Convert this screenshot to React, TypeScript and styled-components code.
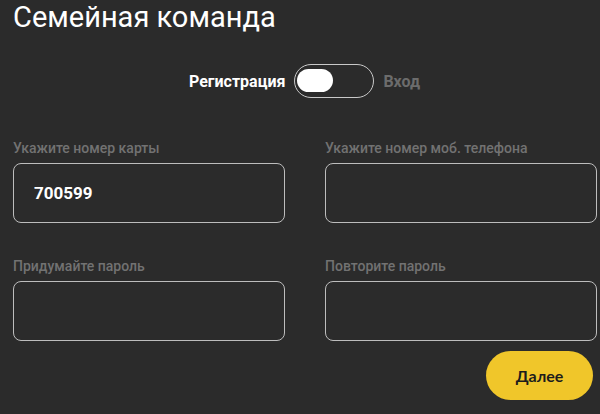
import React, { useState } from 'react'
import styled, { createGlobalStyle } from 'styled-components'

//styling:
const GlobalStyle = createGlobalStyle`
  html, body {
    margin: 0;
    padding: 0;
    background-color: #2b2b2b;
    font-family: Roboto, "Liberation Sans", sans-serif;
  }
`
const Page = styled.div`
  width: 600px;
  height: 414px;
  box-sizing: border-box;
  padding: 0 4px 0 13px;
  background-color: #2b2b2b;
  overflow: hidden;
`
const Title = styled.h1`
  margin: 0;
  padding-top: 0;
  font-size: 29px;
  line-height: 35px;
  font-weight: 400;
  color: #ffffff;
`
const ModeRow = styled.div`
  display: flex;
  justify-content: center;
  align-items: center;
  gap: 9px;
  margin-top: 29px;
`
const ModeText = styled.span<{ $active?: boolean }>`
  font-size: 16px;
  font-weight: 700;
  color: ${p => (p.$active ? '#ffffff' : '#6c6c6c')};
`
const Switch = styled.button<{ $on: boolean }>`
  position: relative;
  width: 80px;
  height: 34px;
  padding: 0;
  border: 1.5px solid #c9c9c9;
  border-radius: 17px;
  background: transparent;
  cursor: pointer;
`
const Knob = styled.span<{ $on: boolean }>`
  position: absolute;
  top: 4px;
  left: ${p => (p.$on ? '2px' : '40px')};
  width: 36px;
  height: 23px;
  border-radius: 12px;
  background-color: #ffffff;
  transition: 300ms;
`
const FormGrid = styled.div`
  display: grid;
  grid-template-columns: 272px 272px;
  column-gap: 40px;
  row-gap: 35px;
  margin-top: 42px;
`
const Field = styled.label`
  display: flex;
  flex-direction: column;
`
const FieldLabel = styled.span`
  font-size: 14px;
  line-height: 16px;
  font-weight: 500;
  color: #727272;
  margin-bottom: 7px;
`
const Input = styled.input`
  box-sizing: border-box;
  width: 100%;
  height: 60px;
  padding: 0 20px;
  border: 1.5px solid #bdbdbd;
  border-radius: 8px;
  background: transparent;
  color: #ffffff;
  font-family: Roboto, "Liberation Sans", sans-serif;
  font-size: 17px;
  font-weight: 700;
  outline: none;
`
const Footer = styled.div`
  display: flex;
  justify-content: flex-end;
  margin-top: 10px;
  padding-right: 3px;
`
const NextButton = styled.button`
  width: 107px;
  height: 49px;
  border: none;
  border-radius: 25px;
  background-color: #f0c62a;
  color: #1c1c1c;
  font-family: Lato, "Liberation Sans", sans-serif;
  font-size: 16px;
  font-weight: 700;
  cursor: pointer;
`

const fields = [
  { label: 'Укажите номер карты', value: '700599' },
  { label: 'Укажите номер моб. телефона', value: '' },
  { label: 'Придумайте пароль', value: '', type: 'password' },
  { label: 'Повторите пароль', value: '', type: 'password' },
]

export default function App() {
  const [register, setRegister] = useState(true)
  const [values, setValues] = useState(fields.map(f => f.value))

  return (
    <Page>
      <GlobalStyle />
      <Title>Семейная команда</Title>
      <ModeRow>
        <ModeText $active={register}>Регистрация</ModeText>
        <Switch $on={register} onClick={() => setRegister(!register)}>
          <Knob $on={register} />
        </Switch>
        <ModeText $active={!register}>Вход</ModeText>
      </ModeRow>
      <FormGrid>
        {fields.map((f, i) => (
          <Field key={f.label}>
            <FieldLabel>{f.label}</FieldLabel>
            <Input
              type={f.type || 'text'}
              value={values[i]}
              onChange={e => setValues(values.map((v, j) => (j === i ? e.target.value : v)))}
            />
          </Field>
        ))}
      </FormGrid>
      <Footer>
        <NextButton>Далее</NextButton>
      </Footer>
    </Page>
  )
}
